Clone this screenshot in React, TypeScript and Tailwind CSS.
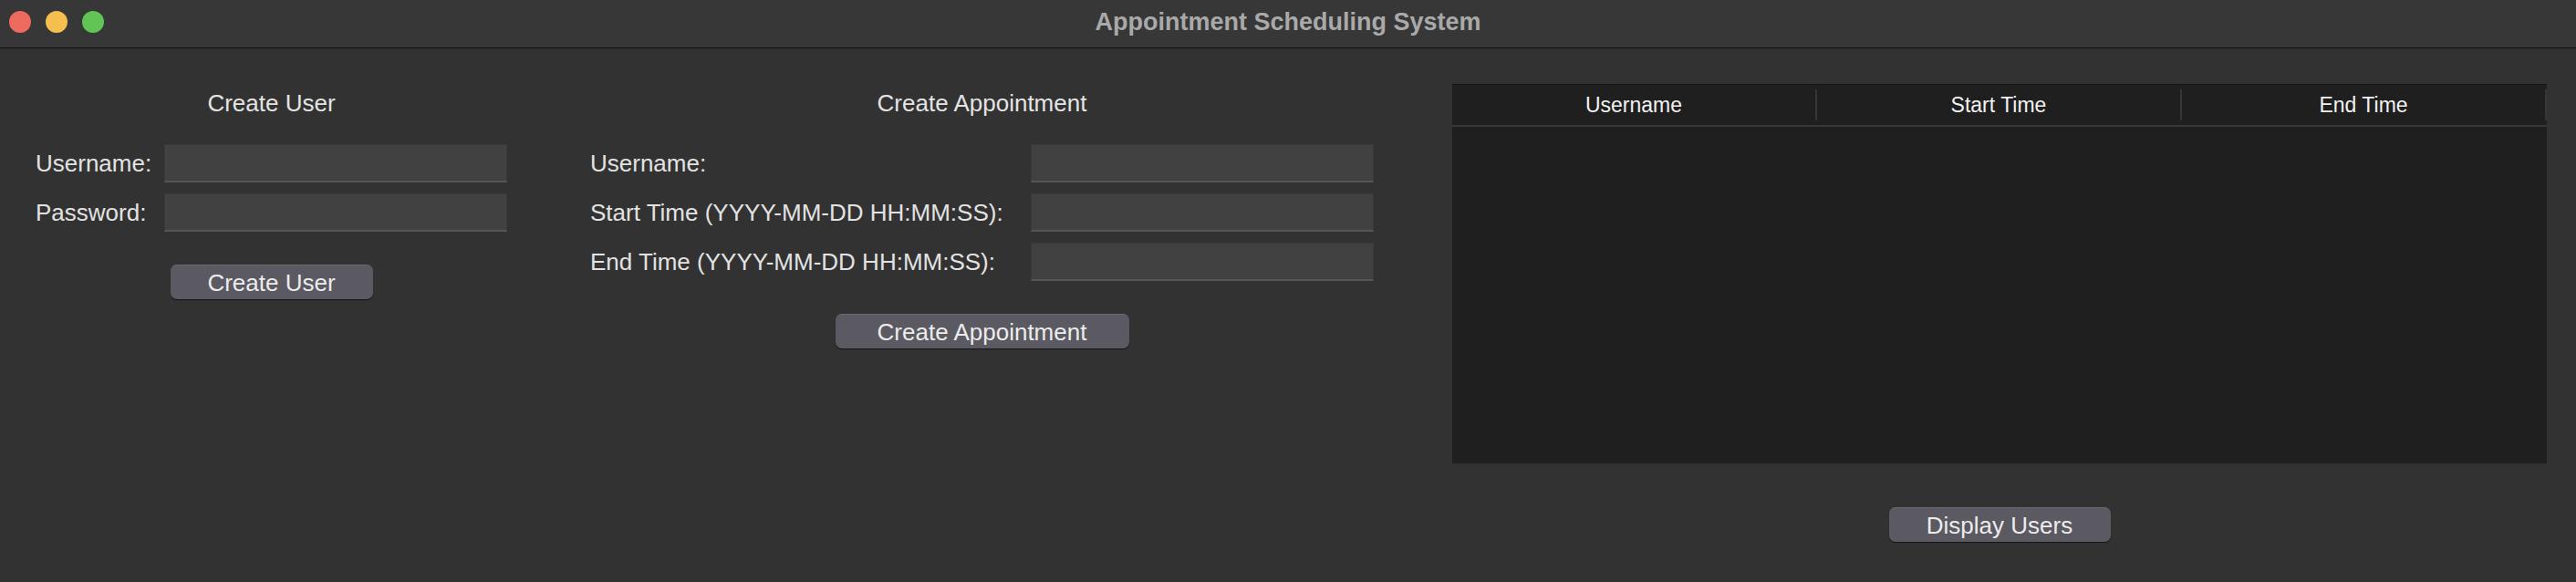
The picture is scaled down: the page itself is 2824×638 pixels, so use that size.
import React from 'react';

type Field = { label: string };

const userFields: Field[] = [{ label: 'Username:' }, { label: 'Password:' }];

const apptFields: Field[] = [
  { label: 'Username:' },
  { label: 'Start Time (YYYY-MM-DD HH:MM:SS):' },
  { label: 'End Time (YYYY-MM-DD HH:MM:SS):' },
];

const columns = ['Username', 'Start Time', 'End Time'];

function Entry() {
  return (
    <div className="h-[42px] w-[376px] bg-[#414141] border border-[#3a3a3a] border-b-2 border-b-[#565656]" />
  );
}

function MacButton({ label, width }: { label: string; width: string }) {
  return (
    <button
      className={`${width} h-[38px] rounded-[7px] bg-[#5b5961] border-t border-t-[#6c6a71] text-[26px] leading-[30px] text-[#ececec] shadow-[0_1px_1px_rgba(0,0,0,0.6)]`}
    >
      {label}
    </button>
  );
}

function FormPanel({
  title,
  fields,
  labelCol,
  button,
}: {
  title: string;
  fields: Field[];
  labelCol: string;
  button: React.ReactNode;
}) {
  return (
    <div className="mt-[6px] flex flex-col items-center">
      <h2 className="h-[30px] text-[26px] leading-[30px] text-[#e4e4e4]">{title}</h2>
      {/* label / entry grid */}
      <div className={`mt-[30px] grid ${labelCol} gap-y-[12px]`}>
        {fields.map((f) => (
          <React.Fragment key={f.label}>
            <div className="h-[42px] flex items-center text-[26px] leading-[30px] text-[#e2e2e2] whitespace-nowrap">
              {f.label}
            </div>
            <Entry />
          </React.Fragment>
        ))}
      </div>
      <div className="mt-[36px]">{button}</div>
    </div>
  );
}

export default function App() {
  return (
    <div className="w-[2824px] h-[638px] bg-[#323232] font-['Liberation_Sans',Arial,sans-serif] overflow-hidden">
      {/* ── Title Bar ── */}
      <div className="h-[53px] grid grid-cols-[1fr_auto_1fr] items-center bg-[#373737] border-b border-[#111111]">
        <div className="flex items-center gap-[16px] pl-[10px] -mt-[4px]">
          <span className="w-[24px] h-[24px] rounded-full bg-[#ee6a5f]" />
          <span className="w-[24px] h-[24px] rounded-full bg-[#f5bf4f]" />
          <span className="w-[24px] h-[24px] rounded-full bg-[#61c554]" />
        </div>
        <div className="-mt-[5px] text-[27px] font-bold text-[#a9a9a9] leading-[30px]">Appointment Scheduling System</div>
        <div />
      </div>

      {/* ── Content ── */}
      <div className="flex items-start pl-[39px] pt-[39px]">
        <FormPanel
          title="Create User"
          fields={userFields}
          labelCol="grid-cols-[141px_376px]"
          button={<MacButton label="Create User" width="w-[222px]" />}
        />

        <div className="ml-[91px]">
          <FormPanel
            title="Create Appointment"
            fields={apptFields}
            labelCol="grid-cols-[483px_376px]"
            button={<MacButton label="Create Appointment" width="w-[322px]" />}
          />
        </div>

        {/* Users table */}
        <div className="ml-[86px] flex flex-col items-center">
          <div className="w-[1200px] bg-[#1f1f1f] border-t border-[#151515]">
            <div className="h-[46px] flex border-b-2 border-[#383838]">
              {columns.map((c) => (
                <React.Fragment key={c}>
                  <div className="flex-1 flex items-center justify-center text-[23px] text-[#f2f2f2]">{c}</div>
                  <div className="w-[2px] my-[5px] bg-[#363636]" />
                </React.Fragment>
              ))}
            </div>
            <div className="h-[369px]" />
          </div>
          <div className="mt-[48px]">
            <MacButton label="Display Users" width="w-[243px]" />
          </div>
        </div>
      </div>
    </div>
  );
}
